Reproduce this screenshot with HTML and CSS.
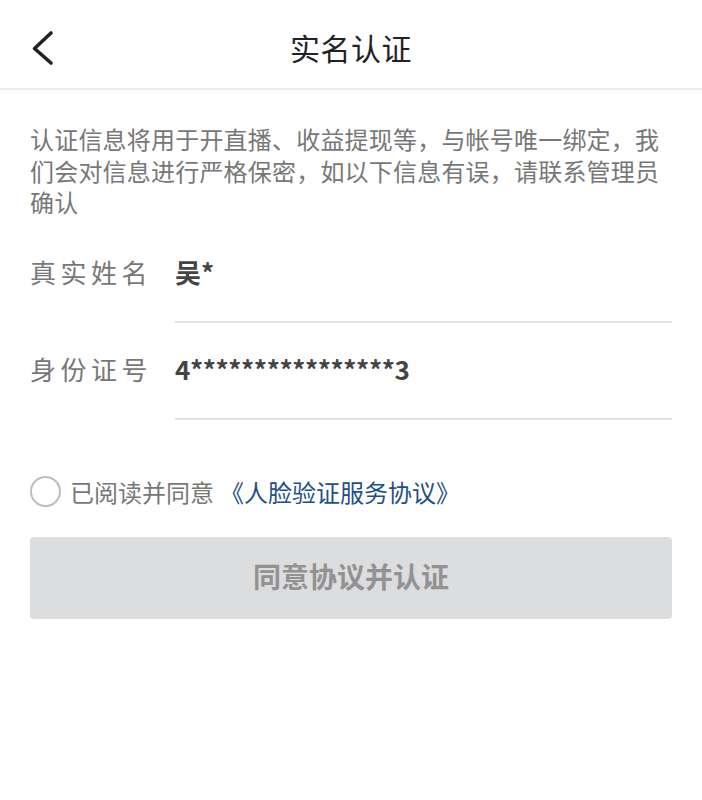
FILE: index.html
```html
<!DOCTYPE html>
<html lang="zh-CN">
<head>
<meta charset="utf-8">
<title>实名认证</title>
<link rel="stylesheet" href="styles.css">
</head>
<body>
<header class="navbar">
  <span class="back">
    <svg width="30" height="40" viewBox="0 0 30 40"><path d="M23 5 L6.5 20.5 L23 35" fill="none" stroke="#222" stroke-width="3.6" stroke-linecap="round" stroke-linejoin="round"/></svg>
  </span>
  <h1 class="title">实名认证</h1>
</header>
<main class="content">
  <p class="notice">认证信息将用于开直播、收益提现等，与帐号唯一绑定，我们会对信息进行严格保密，如以下信息有误，请联系管理员确认</p>
  <div class="row">
    <span class="label">真实姓名</span>
    <span class="field">吴*</span>
  </div>
  <div class="row">
    <span class="label">身份证号</span>
    <span class="field field-id">4****************3</span>
  </div>
  <div class="agree">
    <span class="radio"></span>
    <span class="agree-text">已阅读并同意</span>
    <span class="agree-link">《人脸验证服务协议》</span>
  </div>
  <div class="btn">同意协议并认证</div>
</main>
</body>
</html>
```
FILE: styles.css
```css
* { box-sizing: border-box; }
html, body { margin: 0; padding: 0; background: #fff; }
body {
  font-family: "Noto Sans CJK SC", "Noto Sans", sans-serif;
  color: #333;
}
.navbar {
  position: relative;
  height: 90px;
  border-bottom: 2px solid #ebebeb;
  display: flex;
  align-items: center;
  justify-content: center;
  padding-top: 6px;
}
.back {
  position: absolute;
  left: 28px;
  top: 28px;
  width: 30px;
  height: 40px;
  display: block;
}
.back svg { display: block; }
.title {
  margin: 0;
  font-size: 30px;
  font-weight: 400;
  color: #222;
  line-height: 40px;
  letter-spacing: 0.5px;
}
.content {
  padding: 0 30px;
}
.notice {
  margin: 33px 0 0;
  font-size: 24px;
  line-height: 31.5px;
  color: #777;
  letter-spacing: 0.2px;
}
.row {
  display: flex;
  align-items: flex-start;
  margin-top: 8px;
}
.row + .row { margin-top: 0; }
.label {
  width: 145px;
  flex: none;
  padding-top: 28px;
  line-height: 36px;
  font-size: 26px;
  letter-spacing: 4.5px;
  color: #777;
}
.field {
  flex: 1;
  padding-top: 28px;
  padding-bottom: 31px;
  line-height: 36px;
  font-size: 26px;
  font-weight: 700;
  color: #444;
  border-bottom: 2px solid #e2e2e2;
}
.field-id {
  letter-spacing: -0.4px;
}
.agree {
  display: flex;
  align-items: center;
  margin-top: 56px;
  height: 32px;
}
.radio {
  width: 31px;
  height: 31px;
  border: 2.5px solid #bdbdbd;
  border-radius: 50%;
  flex: none;
  margin-right: 9px;
}
.agree-text {
  font-size: 24px;
  color: #777;
}
.agree-link {
  font-size: 24px;
  color: #1f4f88;
  margin-left: 6px;
}
.btn {
  margin-top: 29px;
  height: 82px;
  border-radius: 4px;
  background: #dcdddf;
  display: flex;
  align-items: center;
  justify-content: center;
  padding-bottom: 4px;
  font-size: 28px;
  font-weight: 700;
  color: #929292;
}
```
